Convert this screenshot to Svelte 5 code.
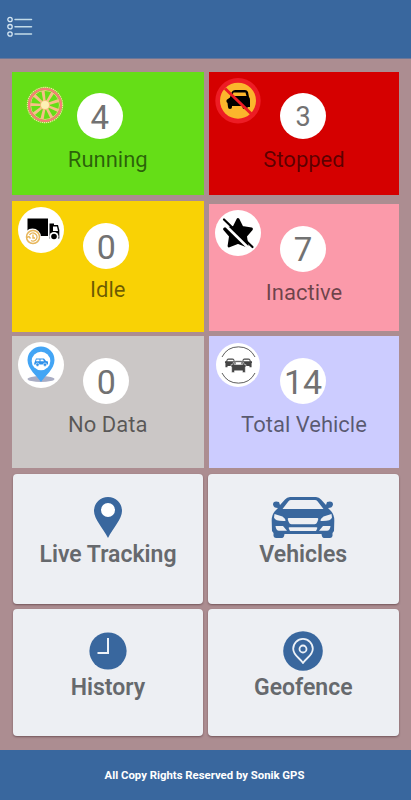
<script>
  const tiles = [
    { id: 'running', count: 4, label: 'Running' },
    { id: 'stopped', count: 3, label: 'Stopped' },
    { id: 'idle', count: 0, label: 'Idle' },
    { id: 'inactive', count: 7, label: 'Inactive' },
    { id: 'nodata', count: 0, label: 'No Data' },
    { id: 'total', count: 14, label: 'Total Vehicle' }
  ];
  const links = [
    { id: 'live', label: 'Live Tracking' },
    { id: 'vehicles', label: 'Vehicles' },
    { id: 'history', label: 'History' },
    { id: 'geofence', label: 'Geofence' }
  ];
  const spokes = [-8, 32, 72, 112, 152, 192, 232, 272, 312];
</script>

{#snippet frontCar()}
  <path fill-rule="evenodd" d="M-8-8Q-7-10-4-10H4Q7-10 8-8L9.500-4 12-4V-1L11 0V9H6.500V6H-6.500V9H-11V0L-12-1V-4L-9.500-4ZM-6-7.500-7-4H7L6-7.500Z" />
{/snippet}

{#snippet badge(id)}
  <svg class="badge" viewBox="-23 -23 46 46" aria-hidden="true">
    {#if id === 'running'}
      <circle r="17.600" fill="none" stroke="#f3e5a0" stroke-width="1.200" stroke-dasharray="1.400 .7" />
      <circle r="14.500" fill="none" stroke="#f5d58c" stroke-width=".8" />
      {#each spokes as a}
        <path transform="rotate({a})" d="M-1.200-4-1.600-14.500H1.600L1.200-4Z" fill="#f8bf88" />
      {/each}
      <circle r="16" fill="none" stroke="#fa7c78" stroke-width="2.200" />
      <circle r="5" fill="#f7bd7c" />
      <circle r="4" fill="#fdf0b4" />
    {:else if id === 'stopped'}
      <circle cy="-.3" r="22.700" fill="#ed1c24" />
      <circle cy="-.3" r="18" fill="#fbb62c" />
      <path fill-rule="evenodd" d="M-6.500-8.500Q-5.500-11-3-11H7Q9-11 10-9L11-4Q12-3 12-1V6H9.500V7Q9.500 8 8 8H6Q4.500 8 4.500 6V5H-6V6Q-6 8-8 8-10 8-10 6L-10.500 2-11.500 1V-1L-8-3.500ZM-4.500-8.500-6-5H8.500L7.500-8.500Z" />
      <path d="M-13-12.500 14 13.500" stroke="#ed1c24" stroke-width="3" />
    {:else if id === 'idle'}
      <circle r="23" fill="#fff" />
      <path d="M-13.500-11.500H7V6H-13.500Z" />
      <path fill-rule="evenodd" d="M8.500-6.500H13V-5H17L18.300 0V8.500H8.500ZM12-3.500V1H17L16-3.500Z" />
      <circle cx="13" cy="6.500" r="4.600" fill="#fff" />
      <circle cx="13" cy="6.500" r="2.800" />
      <circle cx="-8.500" cy="7" r="8.500" fill="#fff" />
      <circle cx="-8" cy="7" r="6.500" fill="none" stroke="#e7b65b" stroke-width="1.500" />
      <path d="M-11.500 5A4 4 0 1 1-10 10.500M-8 4.500V8H-6M-14.500 7.500-12 6.500-10.500 8.500" fill="none" stroke="#e7b65b" stroke-width="1.400" />
    {:else if id === 'inactive'}
      <circle r="23" fill="#fff" />
      <path d="M0-13.500 4-5.500 13.500-4 7.500 3 9 13 0 9.500-9 13-7.500 3-13.500-4-4-5.500Z" stroke="#000" stroke-width="2.800" stroke-linejoin="round" />
      <path d="M-16-11 12 16.500" stroke="#fff" stroke-width="2.600" />
      <path d="M-14-13.500 14.500 14" stroke="#000" stroke-width="2.200" stroke-linecap="round" />
    {:else if id === 'nodata'}
      <circle r="23" fill="#fff" />
      <ellipse cx="0" cy="14" rx="13.500" ry="3" fill="#a9adc4" />
      <path d="M0 17C-4 11-13.500 4-13.500-5A13.500 13.500 0 0 1 13.500-5C13.500 4 4 11 0 17Z" fill="#43a5f5" />
      <circle cy="-4" r="9.300" fill="#fff" />
      <path fill-rule="evenodd" d="M-6.500-2.500-5-6.500H3L5-4 7-3.500V-.500H-7ZM-4.500-5.500-5-3.800H-1.500V-5.500ZM-.5-5.500V-3.800H3L2-5.500Z" fill="#2f91ea" />
      <circle cx="-3.500" cy="-.3" r="1.700" fill="#2f91ea" stroke="#fff" stroke-width=".6" />
      <circle cx="4" cy="-.3" r="1.700" fill="#2f91ea" stroke="#fff" stroke-width=".6" />
    {:else}
      <circle r="22" fill="#fff" />
      <path d="M-16-8A18.500 18.500 0 0 1 17-8M-16 8A18.500 18.500 0 0 0 17 8" fill="none" stroke="#333" stroke-width=".8" />
      <g fill="#444">
        <g transform="translate(-7.500 -1.800) scale(.46)">{@render frontCar()}</g>
        <g transform="translate(8.500 -1.800) scale(.46)">{@render frontCar()}</g>
        <g transform="translate(.5 2) scale(.62)" stroke="#fff" stroke-width=".8">{@render frontCar()}</g>
      </g>
    {/if}
  </svg>
{/snippet}

<div class="screen">
  <header>
    <svg width="27" height="22" viewBox="0 0 27 22" fill="none" aria-label="Menu">
      {#each [3.5, 10.7, 18] as y}
        <circle cx="3" cy={y} r="2.200" stroke="#d3e5f2" stroke-width="1.300" />
        <path d="M8 {y}H24.500" stroke="#c3dbe8" stroke-width="1.500" stroke-linecap="round" />
      {/each}
    </svg>
  </header>

  <main>
    {#each tiles as t}
      <section class="tile {t.id}">
        {@render badge(t.id)}
        <div class="count">{t.count}</div>
        <div class="label">{t.label}</div>
      </section>
    {/each}
    {#each links as l}
      <section class="card {l.id}">
        <div class="art">
          {#if l.id === 'live'}
            <svg width="28" height="41" viewBox="0 0 28 41">
              <path fill="#39679e" d="M14 0A14 14 0 0 1 28 14C28 22 19 31 14 41 9 31 0 22 0 14A14 14 0 0 1 14 0Z" />
              <circle cx="14" cy="13" r="7" fill="#fff" />
            </svg>
          {:else if l.id === 'vehicles'}
            <svg width="64" height="41" viewBox="0 0 64 41">
              <path fill="#39679e" fill-rule="evenodd" d="M19 0H45Q48 0 50 2.500L55 8 56 5Q62 3.500 62 7.500 61.500 11 57 11L60 14Q63.500 18 63.300 24L63 34 61.500 36V39Q61 41 59 41H53Q51 41 50.500 37H13.500Q13 41 11 41H5Q3 41 2.500 39V36L1 34 .7 24Q.5 18 4 14L7 11Q2.500 11 2 7.500 2 3.500 8 5L9 8 14 2.500Q16 0 19 0ZM20 3Q18.500 3 17.500 4.200L11.500 12H52.500L46.500 4.200Q45.500 3 44 3Z" />
              <g fill="#edeff3">
                <path d="M3.500 17 11.500 19.500Q14.500 21.500 14.500 24 4 24.500 3 20.500ZM60.500 17 52.500 19.500Q49.500 21.500 49.500 24 60 24.500 61 20.500Z" />
                <path d="M17.500 21H46.500Q47.500 21 47.200 22.500L46.300 25Q45.500 27.300 43.500 27.300H20.500Q18.500 27.300 17.700 25L16.800 22.500Q16.500 21 17.500 21Z" />
                <path d="M4.500 29H12L16 33.700H8Q5 33.700 4.500 29ZM59.500 29H52L48 33.700H56Q59 33.700 59.500 29ZM18.500 30.300H45.500Q47 30.300 46 32L45 34H19L18 32Q17 30.300 18.500 30.300Z" />
              </g>
            </svg>
          {:else if l.id === 'history'}
            <svg width="38" height="38" viewBox="0 0 38 38">
              <circle cx="19" cy="19" r="18.600" fill="#39679e" />
              <path d="M19 6V21H8.500" fill="none" stroke="#edf2f8" stroke-width="2" />
            </svg>
          {:else}
            <svg width="40" height="40" viewBox="0 0 40 40">
              <circle cx="20" cy="20" r="19.800" fill="#39679e" />
              <g fill="none" stroke="#edf2f8" stroke-width="1.800">
                <path stroke-linejoin="round" d="M20 32C17 27 10.200 24.500 10.200 17.700A9.800 9.800 0 0 1 29.800 17.700C29.800 24.500 23 27 20 32Z" />
                <circle cx="20" cy="18" r="3.500" />
              </g>
            </svg>
          {/if}
        </div>
        <div class="title">{l.label}</div>
      </section>
    {/each}
  </main>

  <footer>All Copy Rights Reserved by Sonik GPS</footer>
</div>

<style>
  :global(body) { margin: 0; }
  .screen {
    width: 411px;
    height: 800px;
    display: flex;
    flex-direction: column;
    background: #ac8d91;
    font-family: Roboto, 'Noto Sans', sans-serif;
    overflow: hidden;
  }
  header {
    box-sizing: border-box;
    height: 59px;
    padding: 16px 0 0 7px;
    background: #39679e;
    border-bottom: 1px solid #6c7697;
  }
  header svg { display: block; }
  main {
    flex: 1;
    display: grid;
    grid-template-columns: 191.5px 190px;
    grid-template-rows: 125px 131px 132px 130px 127px;
    gap: 5px 5.5px;
    padding: 12px 0 0 12px;
    align-content: start;
  }
  .tile {
    position: relative;
    display: flex;
    flex-direction: column;
    align-items: center;
  }
  .badge { position: absolute; left: 6px; top: 6px; width: 46px; height: 46px; }
  .count {
    width: 46px;
    height: 46px;
    border-radius: 50%;
    background: #fff;
    color: #727272;
    font-size: 34px;
    line-height: 48px;
    text-align: center;
  }
  .label {
    margin-top: 8px;
    font-size: 22px;
    line-height: 26px;
    white-space: nowrap;
    color: rgba(0, 0, 0, 0.57);
  }
  .running { height: 123px; margin-top: 0.5px; background: #65de17; }
  .running .count { margin: 21.5px 16px 0 0; font-size: 33px; line-height: 49px; }
  .running .badge { left: 10px; top: 10px; }
  .stopped { height: 123px; margin-top: 0.5px; background: #d50000; }
  .stopped .count { margin: 21.5px 2px 0 0; font-size: 27px; line-height: 49px; }
  .idle { background: #f9d205; }
  .idle .count { margin: 22px 3px 0 0; }
  .inactive { margin: 3px 0 1.5px; background: #fb9aaa; }
  .inactive .count { margin: 22px 2px 0 0; font-size: 33px; }
  .nodata { margin: -1px 0 1px; background: #cbc7c6; }
  .nodata .count { margin: 22px 3px 0 0; }
  .total { margin: -1px 0 1px; background: #ccccff; }
  .total .count { margin: 22px 2px 0 0; }
  .card {
    margin: 0 0.5px 0 1px;
    border-radius: 4px;
    background: #edeff3;
    box-shadow: 0 1px 2px rgba(60, 30, 35, 0.5);
    display: flex;
    flex-direction: column;
    align-items: center;
  }
  .vehicles, .geofence { margin: 0 0.5px 0 -1px; }
  .art { height: 64px; box-sizing: border-box; padding-top: 23px; }
  .history .art, .geofence .art { height: 62px; padding-top: 22.500px; }
  .geofence .art { padding-top: 22px; }
  .art svg { display: block; }
  .title {
    margin-top: 4px;
    font-size: 23px;
    font-weight: 600;
    line-height: 26px;
    color: #66696d;
    white-space: nowrap;
  }
  footer {
    height: 50px;
    padding-right: 2px;
    background: #39679e;
    color: #fff;
    font-size: 11.350px;
    font-weight: 700;
    line-height: 51px;
    text-align: center;
  }
</style>
